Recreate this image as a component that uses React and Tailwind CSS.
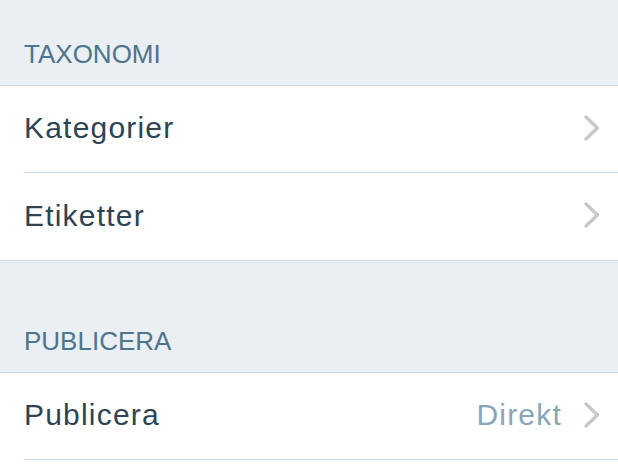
import React from "react";

const Chevron = () => (
  <svg width="18" height="28" viewBox="0 0 18 28" fill="none" className="shrink-0">
    <path d="M3 3 L14.5 14 L3 25" stroke="#c7c7cc" strokeWidth="3.4" strokeLinecap="round" strokeLinejoin="round" />
  </svg>
);

const SectionHeader = ({ title, tall }) => (
  <div
    className={`${tall ? "h-[112px]" : "h-[86px]"} bg-[#e9eff3] border-b border-[#cdd6dd] flex items-end pl-[24px] pb-[18px]`}
  >
    <span className="text-[26px] leading-none text-[#4f748e]">{title}</span>
  </div>
);

const Row = ({ label, value, inset, h }) => (
  <div className={`bg-white ${inset ? "pl-[24px]" : ""}`}>
    <div
      className={`${h} border-b border-[#cdd6dd] flex items-center justify-between pr-[17px] pb-[3px] ${inset ? "" : "pl-[24px]"}`}
    >
      <span className="text-[30px] tracking-[1.2px] text-[#2e4453]">{label}</span>
      <div className="flex items-center gap-[21px]">
        {value && <span className="text-[30px] tracking-[1.2px] text-[#87a6bc]">{value}</span>}
        <Chevron />
      </div>
    </div>
  </div>
);

export default function App() {
  return (
    <div className="w-[618px] h-[475px] overflow-hidden bg-white" style={{ fontFamily: '"Liberation Sans", Arial, sans-serif' }}>
      <SectionHeader title="TAXONOMI" />
      <Row label="Kategorier" inset h="h-[87px]" />
      <Row label="Etiketter" h="h-[88px]" />
      <SectionHeader title="PUBLICERA" tall />
      <Row label="Publicera" value="Direkt" inset h="h-[87px]" />
    </div>
  );
}
